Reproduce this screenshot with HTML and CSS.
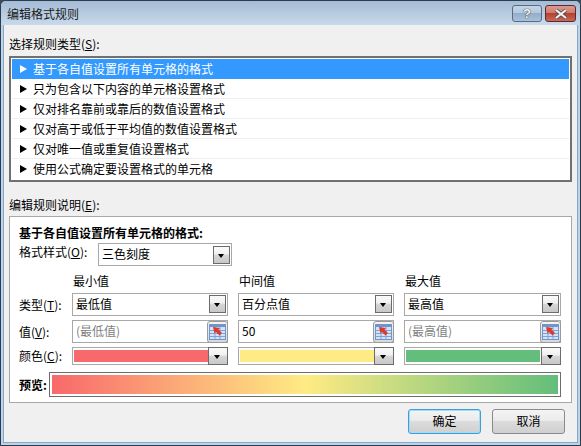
FILE: index.html
```html
<!DOCTYPE html>
<html lang="zh-CN">
<head>
    <meta charset="UTF-8">
    <title>编辑格式规则</title>
    <link rel="stylesheet" href="styles.css">
</head>
<body>
    <svg class="defs" width="0" height="0">
        <defs>
            <symbol id="range-icon" viewBox="0 0 17 16">
                <rect x="0.5" y="0.5" width="16" height="15" fill="#d3e2f7" stroke="#6f96cc"/>
                <rect x="1" y="1" width="15" height="2" fill="#6f96cc"/>
                <path d="M1 6.500h15M1 9.500h15M1 12.500h15M6 3v12M11 3v12" stroke="#7fa3d6" fill="none"/>
                <path d="M4 3l7 1 -1.500 1.500 3.500 3.500 -2.500 2.500 -3.500 -3.500 -1.500 1.500z" fill="#dc3a2c"/>
            </symbol>
        </defs>
    </svg>

    <div class="window">
        <!-- Title bar -->
        <div class="titlebar">
            <span class="title">编辑格式规则</span>
            <div class="caption-btns">
                <div class="cap-btn help">?</div>
                <div class="cap-btn close">
                    <svg width="16" height="10" viewBox="0 0 16 10">
                        <path d="M3 1l10 8M13 1l-10 8" stroke="#4a4a4a" stroke-width="3.600" fill="none"/>
                        <path d="M3 1l10 8M13 1l-10 8" stroke="#f4f4f4" stroke-width="2.200" fill="none"/>
                    </svg>
                </div>
            </div>
        </div>

        <div class="content">
            <!-- Rule types -->
            <div class="label top-label">选择规则类型(<u>S</u>):</div>
            <div class="rule-list">
                <div class="rule selected"><span class="arrow"></span>基于各自值设置所有单元格的格式</div>
                <div class="rule"><span class="arrow"></span>只为包含以下内容的单元格设置格式</div>
                <div class="rule"><span class="arrow"></span>仅对排名靠前或靠后的数值设置格式</div>
                <div class="rule"><span class="arrow"></span>仅对高于或低于平均值的数值设置格式</div>
                <div class="rule"><span class="arrow"></span>仅对唯一值或重复值设置格式</div>
                <div class="rule"><span class="arrow"></span>使用公式确定要设置格式的单元格</div>
            </div>

            <!-- Rule description -->
            <div class="label desc-label">编辑规则说明(<u>E</u>):</div>
            <div class="desc-box">
                <div class="desc-title">基于各自值设置所有单元格的格式:</div>
                <div class="style-row">
                    <span class="style-label">格式样式(<u>O</u>):</span>
                    <div class="field style-select">三色刻度<span class="drop"></span></div>
                </div>

                <div class="grid">
                    <div></div>
                    <div class="col-head">最小值</div>
                    <div class="col-head">中间值</div>
                    <div class="col-head">最大值</div>

                    <div class="row-label">类型(<u>T</u>):</div>
                    <div class="field">最低值<span class="drop"></span></div>
                    <div class="field">百分点值<span class="drop"></span></div>
                    <div class="field">最高值<span class="drop"></span></div>

                    <div class="row-label">值(<u>V</u>):</div>
                    <div class="field muted">(最低值)<span class="range-btn"><svg width="17" height="16"><use href="#range-icon"/></svg></span></div>
                    <div class="field">50<span class="range-btn"><svg width="17" height="16"><use href="#range-icon"/></svg></span></div>
                    <div class="field muted">(最高值)<span class="range-btn"><svg width="17" height="16"><use href="#range-icon"/></svg></span></div>

                    <div class="row-label">颜色(<u>C</u>):</div>
                    <div class="color-field"><span class="swatch red"></span><span class="drop"></span></div>
                    <div class="color-field"><span class="swatch yellow"></span><span class="drop"></span></div>
                    <div class="color-field"><span class="swatch green"></span><span class="drop"></span></div>
                </div>

                <div class="preview-row">
                    <span class="preview-label">预览:</span>
                    <div class="preview"><div class="gradient"></div></div>
                </div>
            </div>

            <!-- Buttons -->
            <div class="buttons">
                <div class="btn default">确定</div>
                <div class="btn">取消</div>
            </div>
        </div>
    </div>
</body>
</html>
```

FILE: styles.css
```css
/* General Styles */
* {
    margin: 0;
    padding: 0;
    box-sizing: border-box;
    font-family: "Noto Sans CJK SC", "Liberation Sans", sans-serif;
}

html, body {
    width: 581px;
    height: 446px;
    overflow: hidden;
    background-color: #3c4a58;
}

body {
    font-size: 12px;
    color: #000;
}

.defs {
    display: block;
    height: 0;
}

u {
    text-underline-offset: 1px;
}

/* Window frame */
.window {
    width: 581px;
    height: 446px;
    border: 1px solid #2c3c4c;
    border-radius: 6px 6px 0 0;
    background-color: #b9d4ec;
    padding: 0 2px 2px;
    display: flex;
    flex-direction: column;
}

.titlebar {
    height: 24px;
    margin: 0 -2px;
    padding: 0 4px 0 6px;
    border-radius: 5px 5px 0 0;
    background: linear-gradient(#a4bcd6, #c8d9ea);
    display: flex;
    justify-content: space-between;
    align-items: flex-start;
}

.title {
    font-size: 12px;
    line-height: 26px;
    color: #1a1a1a;
}

.caption-btns {
    display: flex;
    gap: 3px;
    margin-top: 4px;
}

.cap-btn {
    height: 17px;
    border: 1px solid #5b6c80;
    border-radius: 3px;
    display: flex;
    align-items: center;
    justify-content: center;
}

.help {
    width: 30px;
    background: linear-gradient(#c2d3e6 0%, #b5c9df 45%, #93aecb 50%, #a9c1da 100%);
    color: #f4f4f4;
    font: bold 13px "Liberation Sans", sans-serif;
    text-shadow: 0 0 1px #333, 0 0 1px #333;
}

.close {
    width: 31px;
    border-color: #5c2a2a;
    background: linear-gradient(#dd9a90 0%, #d07a6e 45%, #b7402f 50%, #c9695a 100%);
}

/* Dialog body */
.content {
    flex: 1;
    background-color: #f0f0f0;
    padding: 0 5px;
    border: 1px solid #8aa6c0;
    border-top: none;
    display: flex;
    flex-direction: column;
}

.label {
    line-height: 18px;
}

.top-label {
    margin-top: 10px;
    margin-bottom: 3px;
}

/* Rule type list */
.rule-list {
    height: 126px;
    border: 2px solid #707070;
    background-color: #fff;
    padding: 1px;
}

.rule {
    height: 20px;
    line-height: 20px;
    padding-left: 8px;
    border-bottom: 1px solid #eeeeee;
    white-space: nowrap;
    display: flex;
    align-items: center;
}

.rule:last-child {
    border-bottom: none;
}

.rule.selected {
    background-color: #3399ff;
    color: #fff;
    border-bottom: none;
}

.arrow {
    width: 13px;
    height: 8px;
    border-left: 7px solid currentColor;
    border-top: 4px solid transparent;
    border-bottom: 4px solid transparent;
}

.selected .arrow {
    border-left-color: #fff;
}

/* Description */
.desc-label {
    margin-top: 14px;
    margin-bottom: 2px;
}

.desc-box {
    height: 187px;
    border: 1px solid #a8a8a8;
    background-color: #fff;
    padding: 8px 10px 0 9px;
}

.desc-title {
    font-weight: bold;
    line-height: 15px;
}

.style-row {
    display: flex;
    align-items: flex-start;
    margin-top: 3px;
}

.style-label {
    width: 79px;
    line-height: 18px;
}

.field {
    position: relative;
    height: 23px;
    line-height: 20px;
    border: 1px solid #a8a8a8;
    background-color: #fff;
    padding-left: 3px;
    white-space: nowrap;
}

.style-select {
    width: 134px;
}

.muted {
    color: #808080;
}

/* Dropdown button and the cell picker sit on top of their field */
.drop {
    position: absolute;
    top: 1px;
    right: 1px;
    width: 17px;
    height: 18px;
    border: 1px solid #6c6c6c;
    background: linear-gradient(#fafafa, #f0f0f0 45%, #d6d6d6 50%, #c8c8c8);
}

.drop::after {
    content: "";
    position: absolute;
    left: 4px;
    top: 7px;
    border-left: 3.5px solid transparent;
    border-right: 3.5px solid transparent;
    border-top: 4px solid #000;
}

.style-select .drop {
    top: 2px;
}

.range-btn {
    position: absolute;
    top: 0;
    right: -1px;
    width: 21px;
    height: 22px;
    border: 1px solid #9a9a9a;
    border-radius: 3px;
    background: linear-gradient(#f4f4f4, #d8d8d8);
    display: flex;
    align-items: center;
    justify-content: center;
}

/* Min / mid / max grid */
.grid {
    display: grid;
    grid-template-columns: 43px 156px 156px 157px;
    column-gap: 10px;
    grid-template-rows: 16px 23px 23px 18px;
    row-gap: 4px;
    margin-top: 7px;
}

.col-head {
    line-height: 16px;
    padding-left: 1px;
}

.row-label {
    line-height: 18px;
    align-self: center;
    white-space: nowrap;
}

.color-field {
    position: relative;
    border: 1px solid #a8a8a8;
    padding: 2px 1px;
    background-color: #fff;
}

.color-field .drop {
    top: -1px;
    right: -1px;
    width: 20px;
    height: 18px;
}

.color-field .drop::after {
    left: 5px;
}

.swatch {
    display: block;
    height: 12px;
    width: 134px;
}

.red { background-color: #f8696b; }
.yellow { background-color: #ffeb84; }
.green { background-color: #63be7b; }

/* Preview */
.preview-row {
    display: flex;
    align-items: center;
    margin-top: 7px;
}

.preview-label {
    width: 30px;
    font-weight: bold;
}

.preview {
    width: 512px;
    height: 25px;
    border: 1px solid #6d6d6d;
    background-color: #fff;
    padding: 2px;
}

.gradient {
    height: 19px;
    background: linear-gradient(90deg, #f8696b, #ffeb84 50%, #63be7b);
}

/* Footer buttons */
.buttons {
    display: flex;
    justify-content: flex-end;
    gap: 11px;
    margin-top: 6px;
    margin-right: 7px;
}

.btn {
    width: 73px;
    height: 25px;
    line-height: 22px;
    text-align: center;
    border: 1px solid #8a8a8a;
    border-radius: 3px;
    background: linear-gradient(#f4f4f4, #ebebeb 45%, #dcdcdc 50%, #cfcfcf);
}

.btn.default {
    border-color: #3c9fd8;
    box-shadow: inset 0 0 0 1px #a5dcf5;
}
```
